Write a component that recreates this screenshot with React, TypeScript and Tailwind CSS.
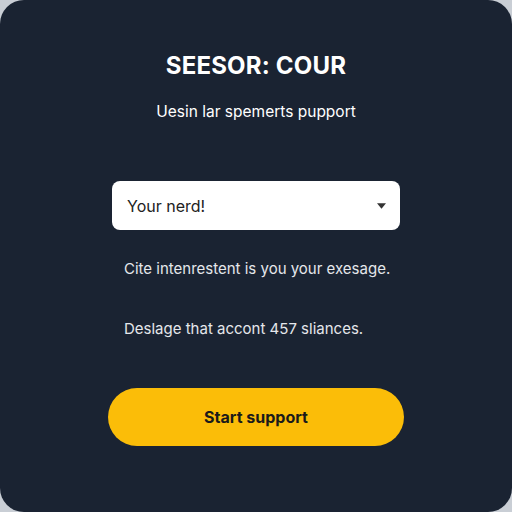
export default function App() {
  return (
    <div className="h-[512px] w-[512px] bg-[#c9ced5]">
      <div
        className="flex h-full w-full flex-col items-center rounded-[24px] bg-[#1a2332]"
        style={{ fontFamily: "Inter, 'Noto Sans', sans-serif" }}
      >
        <h1 className="mt-[51px] text-[24px] font-bold leading-[30px] tracking-[0.2px] text-white">
          SEESOR: COUR
        </h1>
        <p className="mt-[21px] text-[15.5px] leading-[20px] text-white">
          Uesin lar spemerts pupport
        </p>
        <button className="mt-[59px] flex h-[49px] w-[288px] items-center justify-between rounded-[8px] bg-white pl-[15px] pr-[14px] text-[16px] text-[#222]">
          <span>Your nerd!</span>
          <svg viewBox="0 0 10 6" className="h-[6px] w-[9px]">
            <path d="M0 0h10L5 6z" fill="#333" />
          </svg>
        </button>
        <div className="mt-[29px] w-[288px] pl-[12px] text-[15px] leading-[20px] text-[#e5e7eb]">
          <p>Cite intenrestent is you your exesage.</p>
          <p className="mt-[40px]">Deslage that accont 457 sliances.</p>
        </div>
        <button className="mt-[49px] h-[58px] w-[296px] rounded-full bg-[#fbbd08] text-[16px] font-bold text-[#1a1a1a]">
          Start support
        </button>
      </div>
    </div>
  );
}
